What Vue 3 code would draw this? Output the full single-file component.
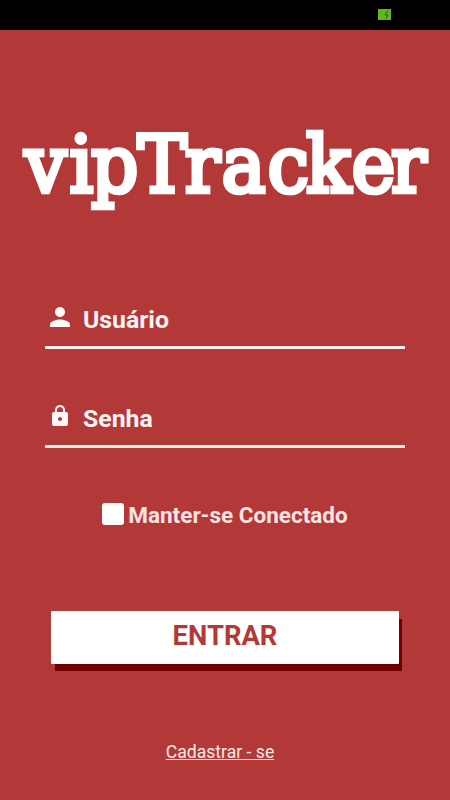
<script setup>
import { ref } from 'vue';

const user = ref('');
const password = ref('');
const keepConnected = ref(false);
</script>

<template>
  <div class="screen">
    <div class="status-bar">
      <svg class="battery" width="13" height="11" viewBox="0 0 13 11">
        <rect width="13" height="11" fill="#65b51b" />
        <path d="M9.8 1.5L7 6h3.2L8 9.5" fill="none" stroke="#245c0b" stroke-width="1" />
      </svg>
    </div>

    <svg class="logo" width="450" height="140" viewBox="0 0 450 140">
      <text
        transform="scale(0.95 1)"
        x="26 73.2 95.8 144.8 194.4 233.2 281.6 322.2 370 411.5"
        y="92"
      >vipTracker</text>
    </svg>

    <form class="login" @submit.prevent>
      <label class="field">
        <svg class="field-icon" width="30" height="30" viewBox="0 0 24 24">
          <path d="M12 12c2.21 0 4-1.79 4-4s-1.79-4-4-4-4 1.79-4 4 1.79 4 4 4zm0 2c-2.67 0-8 1.34-8 4v2h16v-2c0-2.66-5.33-4-8-4z" />
        </svg>
        <input v-model="user" type="text" placeholder="Usuário" />
      </label>

      <label class="field">
        <svg class="field-icon" width="24" height="24" viewBox="0 0 24 24">
          <path d="M18 8h-1V6c0-2.76-2.24-5-5-5S7 3.24 7 6v2H6c-1.1 0-2 .9-2 2v10c0 1.1.9 2 2 2h12c1.1 0 2-.9 2-2V10c0-1.1-.9-2-2-2zm-6 9c-1.1 0-2-.9-2-2s.9-2 2-2 2 .9 2 2-.9 2-2 2zm3.1-9H8.9V6c0-1.71 1.39-3.1 3.1-3.1s3.1 1.39 3.1 3.1v2z" />
        </svg>
        <input v-model="password" type="password" placeholder="Senha" />
      </label>

      <label class="keep">
        <input v-model="keepConnected" type="checkbox" />
        <span>Manter-se Conectado</span>
      </label>

      <button class="enter" type="submit">ENTRAR</button>
    </form>

    <a class="register" href="#">Cadastrar - se</a>
  </div>
</template>

<style>
body {
  background: #b33939;
}
</style>

<style scoped>
.screen {
  width: 450px;
  height: 800px;
  display: flex;
  flex-direction: column;
  align-items: center;
  overflow: hidden;
  background: #b33939;
  color: #fff;
  font-family: Roboto, sans-serif;
}

.status-bar {
  width: 100%;
  height: 30px;
  flex: none;
  box-sizing: border-box;
  padding: 9px 59px 0 0;
  display: flex;
  justify-content: flex-end;
  align-items: flex-start;
  background: #000;
}

.logo {
  flex: none;
  margin-top: 70px;
  overflow: visible;
  fill: #fff;
  /* thickens the thin serifs into slabs */
  stroke: #fff;
  stroke-width: 4.6px;
  font-family: "DejaVu Serif", serif;
  font-weight: 400;
  font-size: 78px;
}

.login {
  width: 360px;
  display: flex;
  flex-direction: column;
  align-items: center;
  margin-top: 52px;
}

.field {
  width: 360px;
  height: 57px;
  box-sizing: border-box;
  display: flex;
  border-bottom: 3px solid #fff0ef;
}

.field + .field {
  margin-top: 42px;
}

.field-icon {
  flex: none;
  width: 30px;
  margin-top: 10px;
  fill: #fff8f7;
}

.field + .field .field-icon {
  margin-top: 13px;
}

.field input {
  width: 300px;
  height: 54px;
  box-sizing: border-box;
  margin: 0 0 0 8px;
  padding: 1px 0 0;
  border: none;
  outline: none;
  background: transparent;
  color: #fff4f2;
  font: 700 24.8px Roboto, sans-serif;
}

.field input::placeholder {
  color: #fff4f2;
  opacity: 1;
}

.keep {
  display: flex;
  align-items: center;
  height: 30px;
  margin-top: 51px;
  gap: 4px;
  color: #ffe4e2;
  font-size: 22.5px;
  font-weight: 700;
  white-space: nowrap;
}

.keep input {
  appearance: none;
  width: 22px;
  height: 22px;
  margin: 0;
  border-radius: 3px;
  background: #fff;
}

.keep input:checked {
  background: #700000;
  border: 3px solid #fff;
}

.keep span {
  padding-top: 1px;
}

.enter {
  width: 348px;
  height: 53px;
  margin-top: 82px;
  padding: 0 0 4px;
  border: none;
  border-radius: 1px;
  background: #fff;
  box-shadow: 3.5px 7.5px 0 -0.5px #700000;
  color: #b33939;
  font: 700 27.4px Roboto, sans-serif;
}

.register {
  margin: 77px 10px 0 0;
  color: #ffe9e6;
  font-size: 17.6px;
  line-height: 22px;
}
</style>
